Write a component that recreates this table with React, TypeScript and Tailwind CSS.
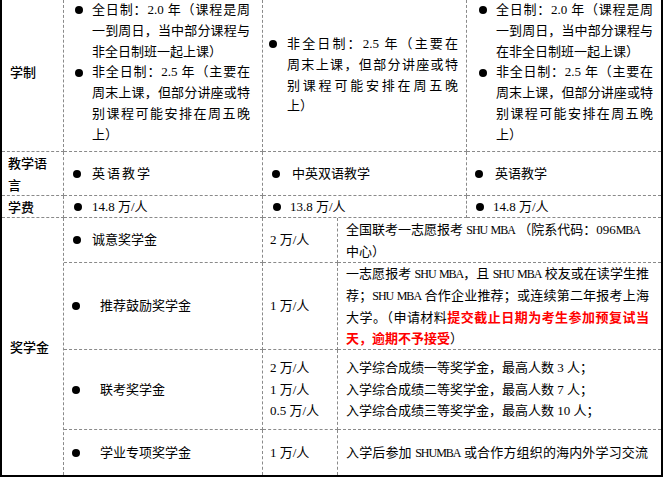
import React from "react";

const J = "whitespace-nowrap text-justify [text-align-last:justify]";
const L = "whitespace-nowrap";
const CELL = "border-dashed border-[#8a8a8a]";

function Dot() {
  return <span className="block w-[8px] h-[8px] rounded-full bg-black" />;
}

function Lt({ children }: { children: React.ReactNode }) {
  return <span className="text-[12px] tracking-[-1px]">{children}</span>;
}

function ShuMba() {
  return (
    <>
      <Lt>SHU</Lt> <Lt>MBA</Lt>
    </>
  );
}

export default function App() {
  return (
    <div
      lang="zh-CN"
      className="w-[665px] h-[477px] bg-white overflow-hidden text-[13px] text-black font-['Liberation_Serif','Noto_Sans_CJK_SC',serif]"
    >
      <div className="w-[663px] border-l-2 border-r-2 border-b-2 border-black grid grid-cols-[62px_199px_75px_129px_194px] grid-rows-[152px_44px_22px_45px_87px_80px_45px]">
        {/* Row 1: 学制 */}
        <div className={`col-start-1 row-start-1 border-r border-b ${CELL} flex items-center pl-[8px] pb-[7px] font-['Noto_Sans_CJK_SC',sans-serif] font-medium`}>
          学制
        </div>
        <div className={`col-start-2 row-start-1 border-r border-b ${CELL} pl-[11px] leading-[20.8px]`}>
          <div className="flex">
            <div className="w-[17px] h-[20.8px] flex items-center"><Dot /></div>
            <div className="w-[158px]">
              <div className={J}>全日制：2.0 年（课程是周</div>
              <div className={J}>一到周日，当中部分课程与</div>
              <div className={L}>非全日制班一起上课）</div>
            </div>
          </div>
          <div className="flex">
            <div className="w-[17px] h-[20.8px] flex items-center"><Dot /></div>
            <div className="w-[158px]">
              <div className={J}>非全日制：2.5 年（主要在</div>
              <div className={J}>周末上课，但部分讲座或特</div>
              <div className={J}>别课程可能安排在周五晚</div>
              <div className={L}>上）</div>
            </div>
          </div>
        </div>
        <div className={`col-start-3 col-span-2 row-start-1 border-r border-b ${CELL} flex items-center pl-[6px] leading-[20.8px]`}>
          <div className="flex">
            <div className="w-[18px] h-[20.8px] flex items-center"><Dot /></div>
            <div className="w-[171px]">
              <div className={J}>非全日制：2.5 年（主要在</div>
              <div className={J}>周末上课，但部分讲座或特</div>
              <div className={J}>别课程可能安排在周五晚</div>
              <div className={L}>上）</div>
            </div>
          </div>
        </div>
        <div className={`col-start-5 row-start-1 border-b ${CELL} pl-[12px] leading-[20.8px]`}>
          <div className="flex">
            <div className="w-[17px] h-[20.8px] flex items-center"><Dot /></div>
            <div className="w-[157px]">
              <div className={J}>全日制：2.0 年（课程是周</div>
              <div className={J}>一到周日，当中部分课程与</div>
              <div className={L}>在非全日制班一起上课）</div>
            </div>
          </div>
          <div className="flex">
            <div className="w-[17px] h-[20.8px] flex items-center"><Dot /></div>
            <div className="w-[157px]">
              <div className={J}>非全日制：2.5 年（主要在</div>
              <div className={J}>周末上课，但部分讲座或特</div>
              <div className={J}>别课程可能安排在周五晚</div>
              <div className={L}>上）</div>
            </div>
          </div>
        </div>

        {/* Row 2: 教学语言 */}
        <div className={`col-start-1 row-start-2 border-r border-b ${CELL} flex flex-col justify-center pl-[6px] leading-[22px] font-['Noto_Sans_CJK_SC',sans-serif] font-medium`}>
          <div>教学语</div>
          <div>言</div>
        </div>
        <div className={`col-start-2 row-start-2 border-r border-b ${CELL} flex items-center pl-[9px]`}>
          <div className="w-[19px] flex items-center"><Dot /></div>
          <span className="tracking-[2px]">英语教学</span>
        </div>
        <div className={`col-start-3 col-span-2 row-start-2 border-r border-b ${CELL} flex items-center pl-[9px]`}>
          <div className="w-[20px] flex items-center"><Dot /></div>
          <span>中英双语教学</span>
        </div>
        <div className={`col-start-5 row-start-2 border-b ${CELL} flex items-center pl-[8px]`}>
          <div className="w-[20px] flex items-center"><Dot /></div>
          <span>英语教学</span>
        </div>

        {/* Row 3: 学费 */}
        <div className={`col-start-1 row-start-3 border-r border-b ${CELL} flex items-center pl-[6px] font-['Noto_Sans_CJK_SC',sans-serif] font-medium`}>
          学费
        </div>
        <div className={`col-start-2 row-start-3 border-r border-b ${CELL} flex items-center pl-[10px]`}>
          <div className="w-[18px] flex items-center"><Dot /></div>
          <span>14.8 万/人</span>
        </div>
        <div className={`col-start-3 col-span-2 row-start-3 border-r border-b ${CELL} flex items-center pl-[10px]`}>
          <div className="w-[17px] flex items-center"><Dot /></div>
          <span>13.8 万/人</span>
        </div>
        <div className={`col-start-5 row-start-3 border-b ${CELL} flex items-center pl-[9px]`}>
          <div className="w-[17px] flex items-center"><Dot /></div>
          <span>14.8 万/人</span>
        </div>

        {/* Scholarship */}
        <div className={`col-start-1 row-start-4 row-span-4 border-r ${CELL} flex items-center pl-[8px] font-['Noto_Sans_CJK_SC',sans-serif] font-medium`}>
          奖学金
        </div>

        {/* a */}
        <div className={`col-start-2 row-start-4 border-r border-b ${CELL} flex items-center pl-[9px]`}>
          <div className="w-[19px] flex items-center"><Dot /></div>
          <span>诚意奖学金</span>
        </div>
        <div className={`col-start-3 row-start-4 border-r border-b ${CELL} flex items-center pl-[7px]`}>
          2 万/人
        </div>
        <div className={`col-start-4 col-span-2 row-start-4 border-b ${CELL} flex items-center pl-[8px] leading-[21px]`}>
          <div className="w-[303px]">
            <div className={L}>
              全国联考一志愿报考 <ShuMba /> （院系代码：096<Lt>MBA</Lt>
            </div>
            <div className={L}>中心）</div>
          </div>
        </div>

        {/* b */}
        <div className={`col-start-2 row-start-5 border-r border-b ${CELL} flex items-center pl-[8px]`}>
          <div className="w-[28px] flex items-center"><Dot /></div>
          <span>推荐鼓励奖学金</span>
        </div>
        <div className={`col-start-3 row-start-5 border-r border-b ${CELL} flex items-center pl-[7px]`}>
          1 万/人
        </div>
        <div className={`col-start-4 col-span-2 row-start-5 border-b ${CELL} flex items-center pl-[8px] leading-[21px]`}>
          <div className="w-[303px]">
            <div className={J}>
              一志愿报考 <ShuMba />，且 <ShuMba /> 校友或在读学生推
            </div>
            <div className={J}>
              荐；<ShuMba /> 合作企业推荐；或连续第二年报考上海
            </div>
            <div className={J}>
              大学。（申请材料<span className="text-[#ff0000] font-bold">提交截止日期为考生参加预复试当</span>
            </div>
            <div className={L}>
              <span className="text-[#ff0000] font-bold">天，逾期不予接受</span>）
            </div>
          </div>
        </div>

        {/* c */}
        <div className={`col-start-2 row-start-6 border-r border-b ${CELL} flex items-center pl-[8px]`}>
          <div className="w-[28px] flex items-center"><Dot /></div>
          <span>联考奖学金</span>
        </div>
        <div className={`col-start-3 row-start-6 border-r border-b ${CELL} flex flex-col justify-center pl-[7px] leading-[21.5px]`}>
          <div>2 万/人</div>
          <div>1 万/人</div>
          <div>0.5 万/人</div>
        </div>
        <div className={`col-start-4 col-span-2 row-start-6 border-b ${CELL} flex flex-col justify-center pl-[8px] leading-[21.5px]`}>
          <div className={L}>入学综合成绩一等奖学金，最高人数 3 人；</div>
          <div className={L}>入学综合成绩二等奖学金，最高人数 7 人；</div>
          <div className={L}>入学综合成绩三等奖学金，最高人数 10 人；</div>
        </div>

        {/* d */}
        <div className={`col-start-2 row-start-7 border-r ${CELL} flex items-center pl-[8px]`}>
          <div className="w-[28px] flex items-center"><Dot /></div>
          <span>学业专项奖学金</span>
        </div>
        <div className={`col-start-3 row-start-7 border-r ${CELL} flex items-center pl-[7px]`}>
          1 万/人
        </div>
        <div className={`col-start-4 col-span-2 row-start-7 flex items-center pl-[8px]`}>
          <div className={`${J} w-[302px]`}>
            入学后参加 <Lt>SHUMBA</Lt> 或合作方组织的海内外学习交流
          </div>
        </div>
      </div>
    </div>
  );
}
